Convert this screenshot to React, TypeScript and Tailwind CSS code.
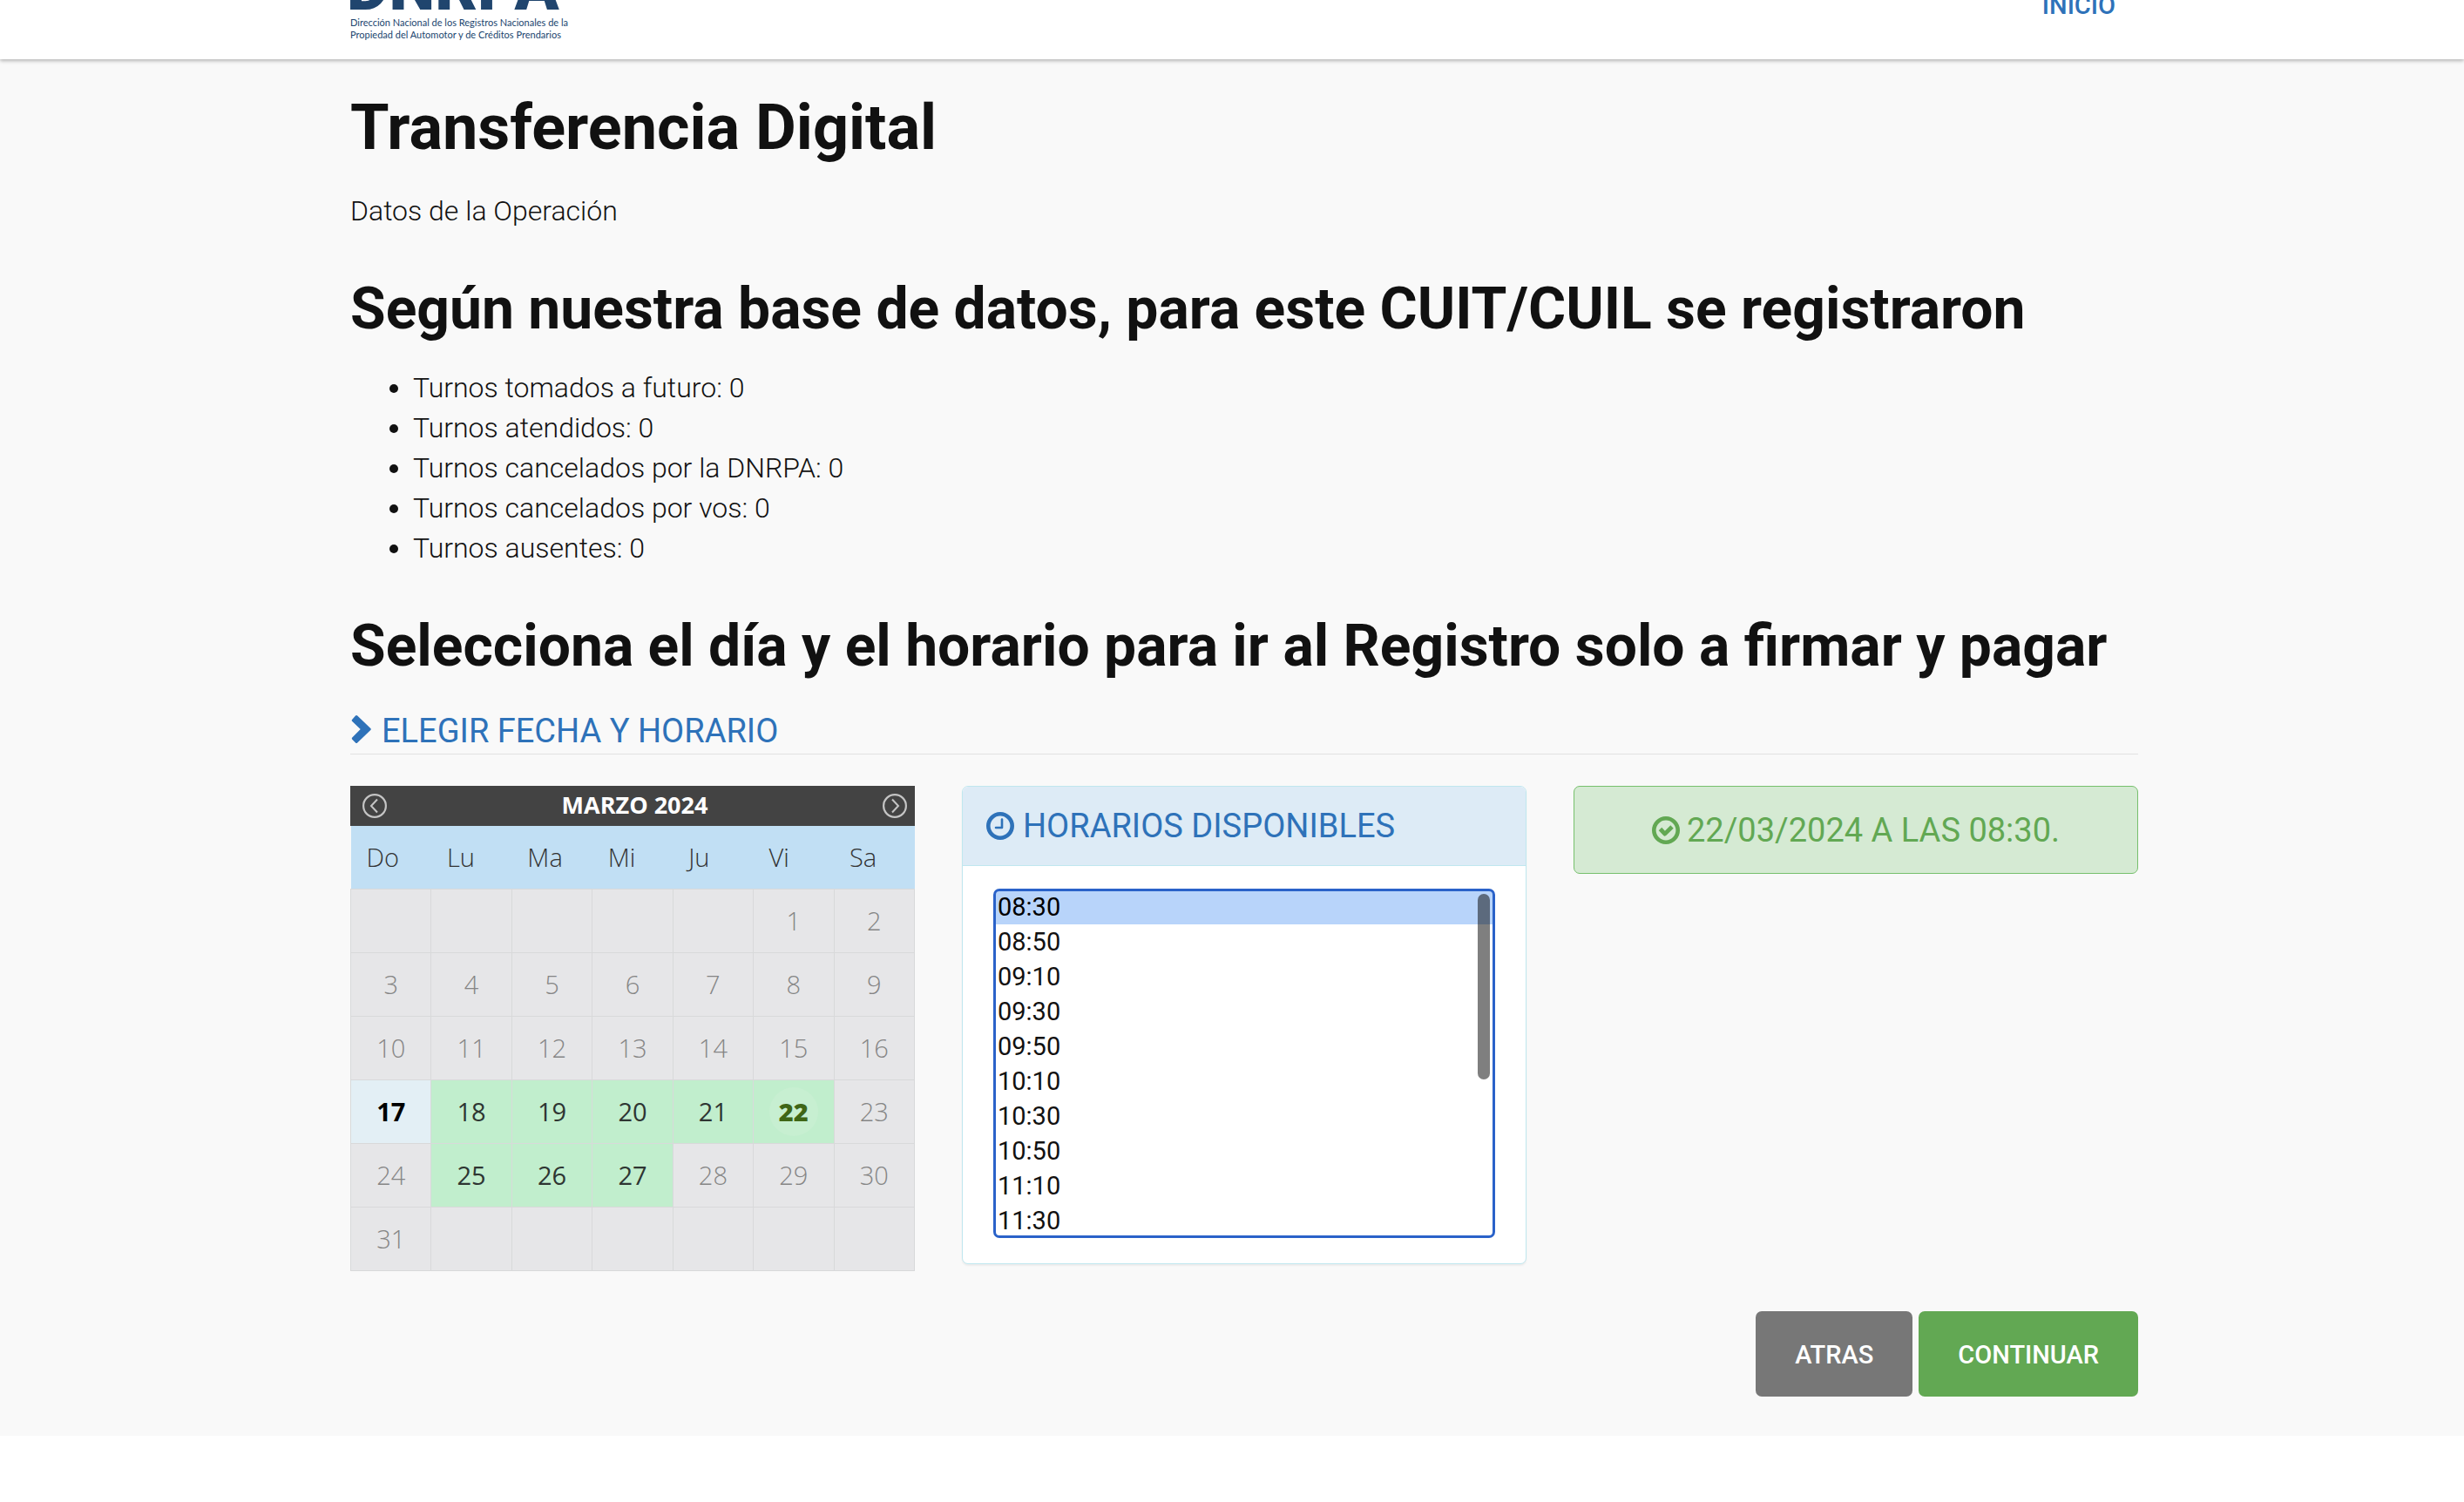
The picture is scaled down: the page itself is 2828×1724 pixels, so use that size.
import React, { useState } from "react";

const WEEKDAYS = ["Do", "Lu", "Ma", "Mi", "Ju", "Vi", "Sa"];
const WEEKS: (number | null)[][] = [
  [null, null, null, null, null, 1, 2],
  [3, 4, 5, 6, 7, 8, 9],
  [10, 11, 12, 13, 14, 15, 16],
  [17, 18, 19, 20, 21, 22, 23],
  [24, 25, 26, 27, 28, 29, 30],
  [31, null, null, null, null, null, null],
];
const TODAY = 17;
const AVAILABLE = [18, 19, 20, 21, 22, 25, 26, 27];
const TIMES = [
  "08:30", "08:50", "09:10", "09:30", "09:50", "10:10", "10:30", "10:50", "11:10",
  "11:30", "11:50", "12:10", "12:30", "12:50", "13:10", "13:30", "13:50", "14:10",
];
const SUMMARY = [
  "Turnos tomados a futuro: 0",
  "Turnos atendidos: 0",
  "Turnos cancelados por la DNRPA: 0",
  "Turnos cancelados por vos: 0",
  "Turnos ausentes: 0",
];

function ChevronRight() {
  return (
    <svg viewBox="0 0 24 34" className="mb-1 h-[34px] w-6" fill="currentColor" aria-hidden="true">
      <path d="M2.300 5.800 6 1.600a1.500 1.500 0 0 1 2.200 0L23.300 16a1.400 1.400 0 0 1 0 2L8.200 32.400a1.500 1.500 0 0 1-2.200 0L2.300 28.700a1.500 1.500 0 0 1 0-2.100L11.700 17 2.300 8a1.500 1.500 0 0 1 0-2.200Z" />
    </svg>
  );
}

function ClockIcon() {
  return (
    <svg viewBox="0 0 32 32" className="size-8" fill="none" stroke="currentColor" aria-hidden="true">
      <circle cx="16" cy="16" r="13.700" strokeWidth="4.600" />
      <path d="M18 8.500v9.500h-7" strokeWidth="2.600" strokeLinecap="round" strokeLinejoin="round" />
    </svg>
  );
}

function CheckIcon() {
  return (
    <svg viewBox="0 0 32 32" className="size-8" fill="none" stroke="currentColor" aria-hidden="true">
      <circle cx="16" cy="16" r="13.700" strokeWidth="4.600" />
      <path d="m9.500 14.500 5.300 5.600L23 12" strokeWidth="4.800" strokeLinejoin="round" />
    </svg>
  );
}

function CircleArrow({ next }: { next?: boolean }) {
  return (
    <svg viewBox="0 0 28 28" className="size-7" fill="none" stroke="#c4c4c4" aria-hidden="true">
      <circle cx="14" cy="14" r="12.900" strokeWidth="2.200" />
      <path d={next ? "m11 6.500 7 7.500-7 7.500" : "m17 6.500-7 7.500 7 7.500"} strokeWidth="2" />
    </svg>
  );
}

function DayCell({ day, selected, onSelect }: { day: number | null; selected: number; onSelect: (d: number) => void }) {
  const base = "h-[73px] border border-[#d8d9da] p-0 text-center align-middle";
  if (day === null) return <td className={`${base} bg-[#e6e6e8]`} />;
  if (day === TODAY) return <td className={`${base} bg-[#e3eff5] font-bold text-black`}>{day}</td>;
  if (!AVAILABLE.includes(day)) return <td className={`${base} bg-[#e6e6e8] font-light text-[#858585]`}>{day}</td>;
  return (
    <td className={`${base} bg-[#c1eecd]`}>
      <button
        type="button"
        onClick={() => onSelect(day)}
        className={
          day === selected
            ? "size-14 rounded-full bg-[#c7efd1] font-extrabold text-[#3f6616]"
            : "size-14 rounded-full font-normal text-[#2e3532]"
        }
      >
        {day}
      </button>
    </td>
  );
}

function Calendar({ selected, onSelect }: { selected: number; onSelect: (d: number) => void }) {
  return (
    <div className="font-['Open_Sans',sans-serif]">
      <div className="flex h-[46px] items-center justify-between bg-[#434343] pr-[9px] pl-[14px] text-white">
        <button type="button" aria-label="Mes anterior">
          <CircleArrow />
        </button>
        <span className="pb-1 text-[27px] leading-none font-bold">MARZO 2024</span>
        <button type="button" aria-label="Mes siguiente">
          <CircleArrow next />
        </button>
      </div>
      <table className="w-full table-fixed border-collapse text-[29px] leading-none">
        <thead>
          <tr className="bg-[#c1dff4]">
            {WEEKDAYS.map((d) => (
              <th key={d} scope="col" className="h-[72px] p-0 pl-[18px] text-left font-light text-[#333]">
                {d}
              </th>
            ))}
          </tr>
        </thead>
        <tbody>
          {WEEKS.map((week, i) => (
            <tr key={i}>
              {week.map((day, j) => (
                <DayCell key={j} day={day} selected={selected} onSelect={onSelect} />
              ))}
            </tr>
          ))}
        </tbody>
      </table>
    </div>
  );
}

export default function App() {
  const [day, setDay] = useState(22);
  const [time, setTime] = useState("08:30");
  return (
    <div className="min-h-screen bg-white font-[Roboto,sans-serif] text-[32px] leading-[46px] font-light text-[#111]">
      <header className="relative h-[68px] bg-white pl-7 shadow-[0_2px_4px_rgba(0,0,0,0.27)]">
        <div className="mx-auto flex h-full max-w-[2052px] items-end justify-between">
          <a href="#dnrpa" className="flex flex-col pb-[21px] text-[#20456e]">
            <span className="-ml-1 text-[75px] leading-[68px] font-black">DNRPA</span>
            <span className="font-[Lato,sans-serif] text-[11px] leading-[14px] font-normal">
              Dirección Nacional de los Registros Nacionales de la
              <br />
              Propiedad del Automotor y de Créditos Prendarios
            </span>
          </a>
          <nav className="pr-[26px] pb-11">
            <a href="#inicio" className="block text-[29px] leading-9 font-medium text-[#2e72b9]">
              INICIO
            </a>
          </nav>
        </div>
      </header>

      <main className="bg-[#f9f9f9] pt-[39px] pb-[45px] pl-7">
        <div className="mx-auto max-w-[2052px]">
          <h1 className="text-[72px] leading-[80px] font-bold">Transferencia Digital</h1>
          <p className="mt-8">Datos de la Operación</p>
          <h2 className="mt-[54px] text-[66px] leading-[72px] font-bold">
            Según nuestra base de datos, para este CUIT/CUIL se registraron
          </h2>
          <ul className="mt-[31px] list-disc pl-[72px]">
            {SUMMARY.map((s) => (
              <li key={s}>{s}</li>
            ))}
          </ul>
          <h2 className="mt-[54px] text-[66px] leading-[72px] font-bold">
            Selecciona el día y el horario para ir al Registro solo a firmar y pagar
          </h2>
          <h3 className="mt-[37px] flex items-center gap-3 border-b border-[#e2e2e2] pb-0.5 text-[38px] leading-[48px] font-normal text-[#2e72b9]">
            <ChevronRight />
            ELEGIR FECHA Y HORARIO
          </h3>

          <div className="mt-9 grid grid-cols-3 items-start gap-[54px]">
            <Calendar selected={day} onSelect={setDay} />

            <section className="overflow-hidden rounded-[7px] border border-[#bfe7ef] bg-white shadow-[0_2px_2px_rgba(0,0,0,0.05)]">
              <label
                htmlFor="horarios"
                className="flex h-[91px] items-center gap-2.5 border-b border-[#bfe7ef] bg-[#ddebf6] px-[27px] text-[38px] font-normal text-[#2e72b9]"
              >
                <ClockIcon />
                HORARIOS DISPONIBLES
              </label>
              <div className="px-9 pt-[27px] pb-[30px]">
                <div className="relative">
                  <select
                    id="horarios"
                    size={10}
                    value={time}
                    onChange={(e) => setTime(e.target.value)}
                    className="block h-[399px] w-full rounded-[6px] bg-white text-[29px] font-normal text-[#111] outline-[3px] -outline-offset-2 outline-[#2a62c9] [scrollbar-width:none]"
                  >
                    {TIMES.map((t) => (
                      <option key={t} value={t} className="h-10 p-0 pt-[3px] pl-1 leading-10 checked:bg-[#b8d4fa] checked:text-black">
                        {t}
                      </option>
                    ))}
                  </select>
                  <div className="pointer-events-none absolute top-[5px] right-[5px] h-[213px] w-[14px] rounded-full bg-black/50" />
                </div>
              </div>
            </section>

            <p className="flex h-[101px] items-center justify-center gap-2 rounded-[7px] border border-[#77c06d] bg-[#d5ead3] text-[38px] font-normal text-[#62a853]">
              <CheckIcon />
              {day}/03/2024 A LAS {time}.
            </p>
          </div>

          <div className="mt-[46px] flex justify-end gap-[7px] text-[29px] font-medium text-white">
            <button type="button" className="h-[98px] rounded-[7px] bg-[#777] px-[45px] pt-0.5">
              ATRAS
            </button>
            <button type="button" className="h-[98px] rounded-[7px] bg-[#62a853] px-[45px] pt-0.5">
              CONTINUAR
            </button>
          </div>
        </div>
      </main>
    </div>
  );
}
